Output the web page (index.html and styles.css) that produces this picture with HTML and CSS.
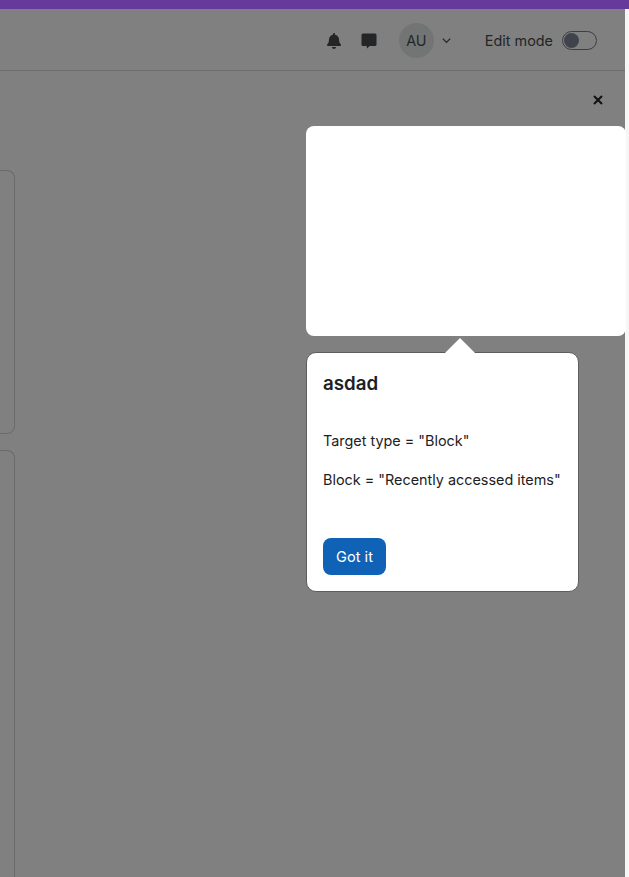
FILE: index.html

```html
<!DOCTYPE html>
<html lang="en">
<head>
    <meta charset="UTF-8">
    <meta name="viewport" content="width=device-width, initial-scale=1.0">
    <title>Dashboard</title>
    <link rel="stylesheet" href="styles.css">
</head>
<body>
<div class="topbar"></div>
<div class="page">
    <header class="navbar">
        <svg class="icon-bell" viewBox="0 0 448 512" width="14" height="16" fill="currentColor"><path d="M224 512c35 0 64-29 64-64H160c0 35 29 64 64 64zm216-150c-19-21-56-52-56-154 0-78-54-140-128-155V32a32 32 0 0 0-64 0v21C118 68 64 130 64 208c0 102-37 133-56 154-6 6-8 13-8 22 0 16 13 32 32 32h384c19 0 32-16 32-32 0-9-2-16-8-22z"/></svg>
        <svg class="icon-msg" viewBox="0 0 16 16" width="16" height="16" fill="currentColor"><path d="M2 .5h12A1.500 1.500 0 0 1 15.500 2v9.500A1.500 1.500 0 0 1 14 13H8.500l-2.300 2.500L5.500 13H2a1.500 1.500 0 0 1-1.500-1.500V2A1.500 1.500 0 0 1 2 .5z"/></svg>
        <div class="avatar">AU</div>
        <svg class="chevron" viewBox="0 0 12 12" width="11" height="11" fill="none" stroke="currentColor" stroke-width="1.400"><path d="M2 4l4 4 4-4"/></svg>
        <span class="edit-label">Edit mode</span>
        <span class="toggle"><span class="knob"></span></span>
    </header>
    <main class="content">
        <div class="card card-first"></div>
        <div class="card card-second"></div>
    </main>
</div>

<button class="close-btn" type="button" aria-label="Close">
    <svg viewBox="0 0 12 12" width="12" height="12" fill="none" stroke="currentColor" stroke-width="2"><path d="M2 2l8 8M10 2l-8 8"/></svg>
</button>
<div class="spotlight"></div>
<div class="popover">
    <div class="arrow"></div>
    <h2>asdad</h2>
    <p class="first">Target type = "Block"</p>
    <p>Block = "Recently accessed items"</p>
    <button class="got-it" type="button">Got it</button>
</div>
</body>
</html>
```

FILE: styles.css

```css
html, body { margin: 0; height: 877px; overflow: hidden; background: #f6f6f6; font-family: Inter, "Liberation Sans", sans-serif; color: #1d2125; }
.topbar { height: 9px; background: #663a9d; }
.page { width: 625px; height: 868px; overflow: hidden; background: #7f807f; }
.navbar { height: 62px; box-sizing: border-box; border-bottom: 1px solid #6b6d6c; display: flex; align-items: center; padding: 2px 28px 0 0; justify-content: flex-end; color: #232527; }
.icon-bell { margin-right: 20px; }
.icon-msg { margin-right: 22px; }
.avatar { width: 35px; height: 35px; border-radius: 50%; background: #737574; display: flex; align-items: center; justify-content: center; font-size: 14.4px; margin-right: 7px; }
.chevron { margin-right: 33px; }
.edit-label { font-size: 14.4px; margin-right: 9px; }
.toggle { width: 35px; height: 19px; box-sizing: border-box; border: 1px solid #3c3f45; border-radius: 10px; display: flex; align-items: center; padding-left: 1px; }
.knob { width: 15px; height: 15px; border-radius: 50%; background: #3f434b; }
.content { padding-top: 99px; }
.card { width: 14px; box-sizing: content-box; border: 1px solid #6a6c6b; border-left: none; border-radius: 0 8px 8px 0; }
.card-first { height: 262px; margin-bottom: 16px; }
.card-second { height: 500px; }
.close-btn { position: absolute; left: 592px; top: 94px; width: 12px; height: 12px; padding: 0; border: none; background: none; color: #111; display: flex; }
.spotlight { position: absolute; left: 306px; top: 126px; width: 320px; height: 210px; background: #fff; border-radius: 8px; }
.popover { position: absolute; left: 306px; top: 352px; width: 273px; height: 240px; box-sizing: border-box; padding: 0 16px; background: #fff; border: 1px solid #5c5e5d; border-radius: 10px; font-size: 14.4px; line-height: 22px; color: #1d2125; }
.arrow { position: absolute; left: 138px; top: -15px; width: 30px; height: 15px; background: #fff; clip-path: polygon(50% 0, 100% 100%, 0 100%); }
.popover h2 { margin: 18px 0 0; font-size: 18.72px; line-height: 26px; font-weight: 600; }
.popover p { margin: 17px 0 0; white-space: nowrap; }
.popover p.first { margin-top: 33px; }
.got-it { display: block; margin-top: 47px; width: 63px; height: 37px; padding: 0; border: none; border-radius: 8px; background: #0f62b5; color: #fff; font: 14.6px Inter, "Liberation Sans", sans-serif; }
```
